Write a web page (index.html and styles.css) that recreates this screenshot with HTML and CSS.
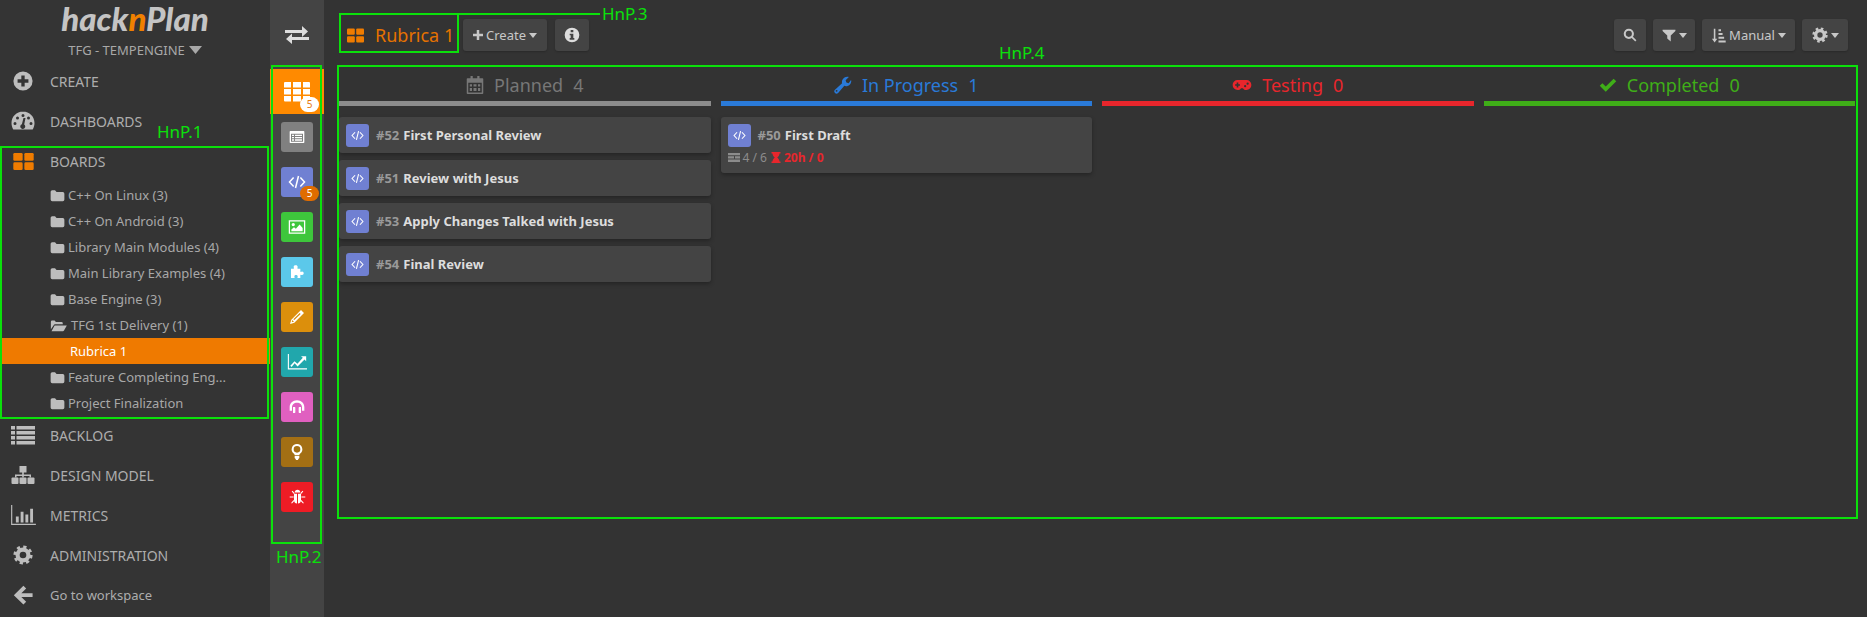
FILE: index.html
```html
<!DOCTYPE html>
<html lang="en">
<head>
  <meta charset="UTF-8" />
  <title>hacknPlan - Rubrica 1</title>
  <link rel="stylesheet" href="styles.css">
</head>
<body>

  <svg class="icon-defs" xmlns="http://www.w3.org/2000/svg">
    <symbol id="i-boards" viewBox="0 0 24 20">
      <rect x="0" y="0" width="11" height="9" rx="1.500"/><rect x="13" y="0" width="11" height="9" rx="1.500"/>
      <rect x="0" y="11" width="11" height="9" rx="1.500"/><rect x="13" y="11" width="11" height="9" rx="1.500"/>
    </symbol>
    <symbol id="i-folder" viewBox="0 0 24 24">
      <path d="M1 6a2.500 2.500 0 0 1 2.500-2.500h4.500l2.500 3h10a2.500 2.500 0 0 1 2.500 2.500v9.500a2.500 2.500 0 0 1-2.500 2.500h-17a2.500 2.500 0 0 1-2.500-2.500z"/>
    </symbol>
    <symbol id="i-folder-open" viewBox="0 0 28 24">
      <path d="M1 18V6a2 2 0 0 1 2-2h4l2 2.500h9a2 2 0 0 1 2 2V10H8a3 3 0 0 0-2.800 1.800z"/>
      <path d="M7 12h19.500l-4.500 8a2 2 0 0 1-1.800 1H2z"/>
    </symbol>
    <symbol id="i-gear" viewBox="0 0 24 24">
      <circle cx="12" cy="12" r="9.500" fill="none" stroke="currentColor" stroke-width="4" stroke-dasharray="3.730 3.730"/>
      <circle cx="12" cy="12" r="6.500" fill="none" stroke="currentColor" stroke-width="5"/>
    </symbol>
    <symbol id="i-code" viewBox="0 0 24 24">
      <path d="M7.500 6 2 12l5.500 6M16.500 6 22 12l-5.500 6M14 4l-4 16" fill="none" stroke="currentColor" stroke-width="2"/>
    </symbol>
    <symbol id="i-caret" viewBox="0 0 10 6">
      <path d="M0 0h10L5 6z"/>
    </symbol>
  </svg>

  <div class="app">

    <aside class="sidebar">
      <div class="logo">hack<span class="logo-n">n</span>Plan</div>
      <div class="project">TFG - TEMPENGINE <svg class="project-caret"><use href="#i-caret"/></svg></div>

      <nav class="nav">
        <a class="nav-item">
          <svg class="nav-icon nav-icon-small" viewBox="0 0 24 24"><path fill-rule="evenodd" d="M12 .500a11.500 11.500 0 1 1 0 23 11.500 11.500 0 0 1 0-23zM10 5.500V10H5.500v4H10v4.500h4V14h4.500v-4H14V5.500z"/></svg>
          CREATE
        </a>
        <a class="nav-item">
          <svg class="nav-icon" viewBox="0 0 24 24"><path fill-rule="evenodd" d="M12 2.500C5.500 2.500.5 7.700.5 14c0 2.300.6 4.500 1.800 6.500h19.400c1.200-2 1.800-4.200 1.800-6.500 0-6.300-5-11.500-11.500-11.500zM12 5a1.500 1.500 0 1 1 0 3 1.500 1.500 0 0 1 0-3zM6.500 7.500a1.500 1.500 0 1 1 0 3 1.500 1.500 0 0 1 0-3zM17.500 7.500a1.500 1.500 0 1 1 0 3 1.500 1.500 0 0 1 0-3zM4 13a1.500 1.500 0 1 1 0 3 1.500 1.500 0 0 1 0-3zM20 13a1.500 1.500 0 1 1 0 3 1.500 1.500 0 0 1 0-3zM14.500 9l-1.300 6.500a2.500 2.500 0 1 1-2.300-.3L12.500 9z"/></svg>
          DASHBOARDS
        </a>
        <a class="nav-item">
          <svg class="nav-icon-boards"><use href="#i-boards"/></svg>
          BOARDS
        </a>

        <ul class="tree">
          <li class="tree-item"><svg class="tree-icon"><use href="#i-folder"/></svg>C++ On Linux (3)</li>
          <li class="tree-item"><svg class="tree-icon"><use href="#i-folder"/></svg>C++ On Android (3)</li>
          <li class="tree-item"><svg class="tree-icon"><use href="#i-folder"/></svg>Library Main Modules (4)</li>
          <li class="tree-item"><svg class="tree-icon"><use href="#i-folder"/></svg>Main Library Examples (4)</li>
          <li class="tree-item"><svg class="tree-icon"><use href="#i-folder"/></svg>Base Engine (3)</li>
          <li class="tree-item tree-open"><svg class="tree-icon-open"><use href="#i-folder-open"/></svg>TFG 1st Delivery (1)</li>
          <li class="tree-item tree-active">Rubrica 1</li>
          <li class="tree-item"><svg class="tree-icon"><use href="#i-folder"/></svg>Feature Completing Eng...</li>
          <li class="tree-item"><svg class="tree-icon"><use href="#i-folder"/></svg>Project Finalization</li>
        </ul>

        <a class="nav-item">
          <svg class="nav-icon" viewBox="0 0 24 24"><path d="M0 3h4v3.500H0zM5.500 3H24v3.500H5.500zM0 8h4v3.500H0zM5.500 8H24v3.500H5.500zM0 13h4v3.500H0zM5.500 13H24v3.500H5.500zM0 18h4v3.500H0zM5.500 18H24v3.500H5.500z"/></svg>
          BACKLOG
        </a>
        <a class="nav-item">
          <svg class="nav-icon" viewBox="0 0 24 24"><path d="M8.500 3h7v6.500h-7zM11.200 9h1.600v3h-1.600z"/><path d="M4 11.500h16v3h-1.500V13h-5.700v1.500h-1.600V13H5.500v1.500H4z"/><rect x=".5" y="14.500" width="7" height="6.500" rx="1"/><rect x="8.500" y="14.500" width="7" height="6.500" rx="1"/><rect x="16.500" y="14.500" width="7" height="6.500" rx="1"/></svg>
          DESIGN MODEL
        </a>
        <a class="nav-item">
          <svg class="nav-icon nav-icon-wide" viewBox="0 0 26 21"><path d="M0 0h1.200v19.800H26V21H0zM5 12h3v6.500H5zM10 7h3v11.500h-3zM15 10h3v8.500h-3zM20 4h3v14.500h-3z"/></svg>
          METRICS
        </a>
        <a class="nav-item">
          <svg class="nav-icon nav-icon-small"><use href="#i-gear"/></svg>
          ADMINISTRATION
        </a>
        <a class="nav-item nav-item-link">
          <svg class="nav-icon nav-icon-small" viewBox="0 0 24 24"><path d="M12.500 1 15.800 4.300 10 10H23.500V14.500H10L15.800 20.200 12.500 23.500 1 12.200z"/></svg>
          Go to workspace
        </a>
      </nav>
    </aside>

    <div class="strip">
      <div class="strip-top">
        <svg class="swap-icon" viewBox="0 0 24 18"><path d="M0 4h17V0l6 5.500-6 5.500V7H0zM24 11H7V7.500L1 13l6 5v-4h17z"/></svg>
      </div>

      <div class="strip-active">
        <svg class="grid-icon" viewBox="0 0 26 20"><path d="M0 1a1 1 0 0 1 1-1h6v5.500H0zM9 0h8v5.500H9zM19 0h6a1 1 0 0 1 1 1v4.500h-7zM0 7h7v5.500H0zM9 7h8v5.500H9zM19 7h7v5.500h-7zM0 14h7v5.500H1a1 1 0 0 1-1-1zM9 14h8v5.500H9zM19 14h7v4.500a1 1 0 0 1-1 1h-6z"/></svg>
        <span class="pill pill-white">5</span>
      </div>

      <div class="strip-item">
        <div class="tile tile-gray">
          <svg class="tile-icon tile-icon-small" viewBox="0 0 24 24"><path fill-rule="evenodd" d="M2 3h20a1 1 0 0 1 1 1v16a1 1 0 0 1-1 1H2a1 1 0 0 1-1-1V4a1 1 0 0 1 1-1zM3 7v12h18V7zM4.500 8.500h3v2h-3zM9 8.500h10.500v2H9zM4.500 12h3v2h-3zM9 12h10.500v2H9zM4.500 15.500h3v2h-3zM9 15.500h10.500v2H9z"/></svg>
        </div>
      </div>
      <div class="strip-item">
        <div class="tile tile-purple"><svg class="tile-icon"><use href="#i-code"/></svg></div>
        <span class="pill pill-orange">5</span>
      </div>
      <div class="strip-item">
        <div class="tile tile-green">
          <svg class="tile-icon" viewBox="0 0 24 24"><path fill-rule="evenodd" d="M1 3h22v18H1zM2.700 4.700v14.600h18.600V4.700zM7 6.500a2.200 2.200 0 1 1 0 4.400 2.200 2.200 0 0 1 0-4.400zM4.500 17.800v-2.500l3.500-3 2.500 2 5-5.500 4 4.500v4.500z"/></svg>
        </div>
      </div>
      <div class="strip-item">
        <div class="tile tile-blue">
          <svg class="tile-icon tile-icon-small" viewBox="0 0 24 24"><path d="M10 2c2 0 3 1 3 2.500 0 .8-.5 1.300-.5 2 0 .4.300.5 1 .5H17v4c0 .7.200 1 .6 1 .7 0 1.200-.6 2-.6 1.500 0 2.400 1.100 2.400 2.600s-.9 2.600-2.400 2.600c-.8 0-1.300-.6-2-.6-.4 0-.6.300-.6 1V21h-3.500c-.7 0-1-.2-1-.6 0-.7.600-1.200.6-2 0-1-1-1.900-2.600-1.900s-2.500.9-2.500 1.900c0 .8.600 1.300.6 2 0 .4-.3.600-1 .6H3V7h3.500c.7 0 1-.1 1-.5 0-.7-.5-1.200-.5-2C7 3 8 2 10 2z"/></svg>
        </div>
      </div>
      <div class="strip-item">
        <div class="tile tile-orange">
          <svg class="tile-icon tile-icon-small" viewBox="0 0 24 24"><path fill-rule="evenodd" d="M18 1.500 22.500 6 8 20.500 1.500 22.500 3.500 16zM5 16.500l-1 3.500 3.500-1zM16 6 6.500 15.500l1.500 1L17.500 7.500z"/></svg>
        </div>
      </div>
      <div class="strip-item">
        <div class="tile tile-teal">
          <svg class="tile-icon tile-icon-large" viewBox="0 0 24 24"><path d="M1 2.500h1.300v17H24V21H1z"/><path d="M4 16.500 9 11l3.500 3L19 7l-2.200-2H23v6l-2-2-8.300 8.500L9.200 13.500 5.500 18z"/></svg>
        </div>
      </div>
      <div class="strip-item">
        <div class="tile tile-pink">
          <svg class="tile-icon tile-icon-small" viewBox="0 0 24 24"><path d="M12 2C5.500 2 1 6.500 1 12.500v5h3.500v-5C4.500 8.500 7.500 5.500 12 5.500s7.500 3 7.500 7v5H23v-5C23 6.500 18.500 2 12 2z"/><path d="M6 12h2.500a1 1 0 0 1 1 1v7a1 1 0 0 1-1 1H6zM18 12h-2.500a1 1 0 0 0-1 1v7a1 1 0 0 0 1 1H18z"/></svg>
        </div>
      </div>
      <div class="strip-item">
        <div class="tile tile-brown">
          <svg class="tile-icon tile-icon-small" viewBox="0 0 24 24"><path fill-rule="evenodd" d="M12 0a8 8 0 0 1 4.500 14.600c-.8.700-1 1.400-1 2.400h-7c0-1-.2-1.700-1-2.400A8 8 0 0 1 12 0zM12 3a5 5 0 1 0 0 10 5 5 0 0 0 0-10z"/><path d="M8.500 18h7v3l-1.500 1.500-.5 1.500h-3l-.5-1.500L8.500 21z"/></svg>
        </div>
      </div>
      <div class="strip-item">
        <div class="tile tile-red">
          <svg class="tile-icon tile-icon-bug" viewBox="0 0 24 24"><path d="M8 6.500C8 4 9.700 2.500 12 2.500S16 4 16 6.500z"/><path d="M7 8h4.300v14C8.500 21.700 7 19.500 7 16.500zM17 8h-4.300v14c2.800-.3 4.300-2.500 4.300-5.500z"/><path d="M5 4l3 3.500-1 1L3.800 5zM19 4l-3 3.500 1 1L20.200 5zM1 12h5.500v1.500H1zM17.500 12H23v1.500h-5.500zM6.500 17l-3.500 4 1.200 1 3.300-3.500zM17.500 17l3.500 4-1.200 1-3.300-3.500z"/></svg>
        </div>
      </div>
    </div>

    <main class="main">
      <header class="toolbar">
        <div class="board-title">
          <svg class="board-title-icon"><use href="#i-boards"/></svg>
          Rubrica 1
        </div>
        <button class="btn btn-create">
          <svg class="btn-plus" viewBox="0 0 12 12"><path d="M4.500 0h3v4.500H12v3H7.500V12h-3V7.500H0v-3h4.500z"/></svg>
          Create
          <svg class="caret"><use href="#i-caret"/></svg>
        </button>
        <button class="btn btn-square">
          <svg class="btn-icon-large" viewBox="0 0 24 24"><path fill-rule="evenodd" d="M12 1a11 11 0 1 1 0 22 11 11 0 0 1 0-22zM10 4.500v3.500h4V4.500zM8.500 10v2.500H10v4H8.500V19h7v-2.500H14V10z"/></svg>
        </button>

        <div class="toolbar-right">
          <button class="btn btn-search">
            <svg class="btn-icon" viewBox="0 0 24 24"><circle cx="10" cy="10" r="7" fill="none" stroke="currentColor" stroke-width="3.500"/><path d="M14.500 16.500l2-2 6.500 6.500-2 2z"/></svg>
          </button>
          <button class="btn btn-filter">
            <svg class="btn-icon" viewBox="0 0 24 24"><path d="M1 3h22v2L15 13v10l-6-5v-5L1 5z"/></svg>
            <svg class="caret"><use href="#i-caret"/></svg>
          </button>
          <button class="btn btn-sort">
            <svg class="btn-icon" viewBox="0 0 24 24"><path d="M4.500 1h2.500v16h3L5.800 23 1.500 17h3zM12 2h4v3h-4zM12 8h6.500v3H12zM12 14h9v3h-9zM12 20h11.500v3H12z"/></svg>
            Manual
            <svg class="caret"><use href="#i-caret"/></svg>
          </button>
          <button class="btn btn-gear">
            <svg class="btn-icon"><use href="#i-gear"/></svg>
            <svg class="caret"><use href="#i-caret"/></svg>
          </button>
        </div>
      </header>

      <section class="board">
        <div class="column">
          <h2 class="column-title title-planned">
            <svg class="column-icon" viewBox="0 0 24 24"><path fill-rule="evenodd" d="M6 0h3v3h6V0h3v3h4a1 1 0 0 1 1 1v19a1 1 0 0 1-1 1H2a1 1 0 0 1-1-1V4a1 1 0 0 1 1-1h4zM3 9v13h18V9zM5 11h3v3H5zM10 11h4v3h-4zM16 11h3v3h-3zM5 16h3v4H5zM10 16h4v4h-4zM16 16h3v4h-3z"/></svg>
            <span>Planned</span><span>4</span>
          </h2>
          <div class="card">
            <div class="card-head">
              <span class="task-icon"><svg><use href="#i-code"/></svg></span>
              <span class="task-id">#52</span><span class="task-name">First Personal Review</span>
            </div>
          </div>
          <div class="card">
            <div class="card-head">
              <span class="task-icon"><svg><use href="#i-code"/></svg></span>
              <span class="task-id">#51</span><span class="task-name">Review with Jesus</span>
            </div>
          </div>
          <div class="card">
            <div class="card-head">
              <span class="task-icon"><svg><use href="#i-code"/></svg></span>
              <span class="task-id">#53</span><span class="task-name">Apply Changes Talked with Jesus</span>
            </div>
          </div>
          <div class="card">
            <div class="card-head">
              <span class="task-icon"><svg><use href="#i-code"/></svg></span>
              <span class="task-id">#54</span><span class="task-name">Final Review</span>
            </div>
          </div>
        </div>

        <div class="column">
          <h2 class="column-title title-progress">
            <svg class="column-icon" viewBox="0 0 24 24"><path fill-rule="evenodd" d="M23 6.500c0 4-3.200 7-7 7-.8 0-1.500-.1-2.200-.4L5.500 22.500a3 3 0 0 1-4.200 0 3 3 0 0 1 0-4.200l9.500-8.500A7 7 0 0 1 18 1c.6 0 1.300.1 1.800.3L15.500 5.500l1 3 3 1 3.200-4.200c.2.400.3.800.3 1.200zM3.500 18.500a1.200 1.200 0 1 0 0 2.400 1.200 1.200 0 0 0 0-2.400z"/></svg>
            <span>In Progress</span><span>1</span>
          </h2>
          <div class="card">
            <div class="card-head">
              <span class="task-icon"><svg><use href="#i-code"/></svg></span>
              <span class="task-id">#50</span><span class="task-name">First Draft</span>
            </div>
            <div class="card-meta">
              <svg class="meta-list" viewBox="0 0 24 18"><path d="M0 0h24v4.500H0zM0 6.500h12v4.500H0zM14 6.500h10v4.500H14zM0 13h24v5H0z"/></svg>
              <span>4 / 6</span>
              <svg class="meta-glass" viewBox="0 0 20 22"><path d="M1 0h18v3h-2c0 4-2.500 6-4.500 8 2 2 4.500 4 4.500 8h2v3H1v-3h2c0-4 2.500-6 4.500-8C5.500 9 3 7 3 3H1z"/></svg>
              <span class="meta-late">20h / 0</span>
            </div>
          </div>
        </div>

        <div class="column">
          <h2 class="column-title title-testing">
            <svg class="column-icon column-icon-wide" viewBox="0 0 32 18"><path fill-rule="evenodd" d="M9 1h14a8 8 0 0 1 0 16c-2.500 0-4.500-1-5.500-3h-3c-1 2-3 3-5.500 3A8 8 0 0 1 9 1zM7.500 5v2.700H5v2.600h2.500V13h2.600v-2.700h2.600V7.700h-2.600V5zM21 9a1.800 1.800 0 1 0 0 3.600A1.800 1.800 0 0 0 21 9zM25 5a1.800 1.800 0 1 0 0 3.600A1.800 1.800 0 0 0 25 5z"/></svg>
            <span>Testing</span><span>0</span>
          </h2>
        </div>

        <div class="column">
          <h2 class="column-title title-completed">
            <svg class="column-icon" viewBox="0 0 24 24"><path d="M9 21 1 13l3.500-3.500L9 14 19.500 3.500 23 7z"/></svg>
            <span>Completed</span><span>0</span>
          </h2>
        </div>
      </section>
    </main>

  </div>

  <!-- review markers drawn over the screenshot -->
  <div class="mark mark-1"></div>
  <div class="mark mark-2"></div>
  <div class="mark mark-3"></div>
  <div class="mark mark-3-line"></div>
  <div class="mark mark-4"></div>
  <span class="mark-label label-1">HnP.1</span>
  <span class="mark-label label-2">HnP.2</span>
  <span class="mark-label label-3">HnP.3</span>
  <span class="mark-label label-4">HnP.4</span>

</body>
</html>
```

FILE: styles.css
```css
* {
  box-sizing: border-box;
}

html, body {
  height: 100%;
}

body {
  margin: 0;
  position: relative;
  overflow: hidden;
  background-color: #333;
  font-family: "Noto Sans", sans-serif;
  color: #b0b0b0;
}

svg {
  fill: currentColor;
}

.icon-defs {
  display: none;
}

.app {
  display: flex;
  height: 100%;
}

/* left menu */
.sidebar {
  width: 270px;
  flex-shrink: 0;
  background-color: #343434;
}

.logo {
  height: 38px;
  text-align: center;
  font-family: "Lato", sans-serif;
  font-size: 33px;
  font-weight: 900;
  font-style: italic;
  line-height: 36px;
  color: #c4c4c4;
}

.logo-n {
  color: #f08000;
}

.project {
  height: 24px;
  display: flex;
  align-items: center;
  justify-content: center;
  gap: 4px;
  font-size: 13px;
  color: #a8a8a8;
}

.project-caret {
  width: 13px;
  height: 8px;
}

.nav-item {
  height: 40px;
  padding-bottom: 2px;
  display: flex;
  align-items: center;
  font-size: 14px;
  color: #adadad;
}

.nav-item-link {
  font-size: 13px;
}

.nav-icon {
  width: 24px;
  height: 24px;
  margin-left: 11px;
  margin-right: 15px;
  color: #bdbdbd;
}

.nav-icon-small {
  width: 20px;
  height: 20px;
  margin-left: 13px;
  margin-right: 17px;
}

.nav-icon-wide {
  width: 25px;
  height: 20px;
  margin-left: 11px;
  margin-right: 14px;
}

.nav-icon-boards {
  width: 21px;
  height: 17px;
  margin-left: 13px;
  margin-right: 16px;
  color: #f07c00;
}

.tree {
  list-style: none;
  margin: 0;
  padding: 0;
}

.tree-item {
  height: 26px;
  display: flex;
  align-items: center;
  padding-left: 50px;
  font-size: 13px;
  color: #a8a8a8;
}

.tree-icon {
  width: 15px;
  height: 15px;
  margin-right: 3px;
  color: #bdbdbd;
}

.tree-icon-open {
  width: 18px;
  height: 15px;
  margin-right: 3px;
  color: #bdbdbd;
}

.tree-active {
  padding-left: 70px;
  background-color: #ef7a00;
  color: #fff;
}

/* icon strip */
.strip {
  width: 54px;
  flex-shrink: 0;
  background-color: #444;
}

.strip-top {
  height: 69px;
  display: flex;
  align-items: center;
  justify-content: center;
}

.swap-icon {
  width: 24px;
  height: 18px;
  color: #ddd;
}

.strip-active {
  position: relative;
  height: 45px;
  display: flex;
  align-items: center;
  justify-content: center;
  background-color: #ff8a00;
}

.grid-icon {
  width: 26px;
  height: 20px;
  color: #fff;
}

.strip-item {
  position: relative;
  height: 45px;
  display: flex;
  align-items: center;
  justify-content: center;
}

.tile {
  width: 32px;
  height: 30px;
  display: flex;
  align-items: center;
  justify-content: center;
  border-radius: 3px;
}

.tile-icon {
  width: 18px;
  height: 18px;
  color: #fff;
}

.tile-icon-small {
  width: 16px;
  height: 16px;
}

.tile-icon-large {
  width: 20px;
  height: 20px;
}

.tile-icon-bug {
  width: 17px;
  height: 17px;
}

.tile-gray { background-color: #808080; }
.tile-purple { background-color: #7080d2; }
.tile-green { background-color: #3ec63c; }
.tile-blue { background-color: #5bc8ea; }
.tile-orange { background-color: #dc8f0c; }
.tile-teal { background-color: #21a7ac; }
.tile-pink { background-color: #e060c0; }
.tile-brown { background-color: #a36f14; }
.tile-red { background-color: #ee1c25; }

.pill {
  position: absolute;
  left: 30px;
  width: 19px;
  height: 15px;
  border-radius: 8px;
  text-align: center;
  font-size: 10px;
  line-height: 15px;
}

.pill-white {
  top: 28px;
  background-color: #fff;
  color: #e87a10;
}

.pill-orange {
  top: 27px;
  background-color: #e06c00;
  color: #fff;
}

/* board area */
.main {
  flex: 1;
  min-width: 0;
  padding: 0 12px 0 15px;
  background-color: #333;
}

.toolbar {
  height: 69px;
  padding-top: 19px;
  display: flex;
  align-items: flex-start;
  gap: 8px;
}

.board-title {
  width: 116px;
  height: 32px;
  display: flex;
  align-items: center;
  padding-left: 8px;
  gap: 11px;
  font-size: 18px;
  color: #e67200;
  white-space: nowrap;
}

.board-title-icon {
  width: 17px;
  height: 15px;
  flex-shrink: 0;
  color: #f07c00;
}

.btn {
  height: 32px;
  display: flex;
  align-items: center;
  justify-content: center;
  gap: 3px;
  padding: 0;
  border: 0;
  border-radius: 3px;
  background-color: #444;
  font-family: inherit;
  font-size: 13px;
  color: #c8c8c8;
  box-shadow: 0 1px 2px rgba(0,0,0,0.2);
}

.btn-create { width: 84px; }
.btn-square { width: 34px; }
.btn-search { width: 32px; }
.btn-filter { width: 42px; }
.btn-sort { width: 93px; }
.btn-gear { width: 46px; }

.btn-plus {
  width: 10px;
  height: 10px;
}

.btn-icon {
  width: 14px;
  height: 14px;
}

.btn-sort .btn-icon {
  width: 15px;
  height: 15px;
}

.btn-gear .btn-icon {
  width: 16px;
  height: 16px;
}

.btn-icon-large {
  width: 16px;
  height: 16px;
  color: #ddd;
}

.caret {
  width: 8px;
  height: 5px;
}

.toolbar-right {
  margin-left: auto;
  margin-right: 7px;
  display: flex;
  gap: 7px;
}

.board {
  display: grid;
  grid-template-columns: repeat(4, 1fr);
  gap: 10px;
}

.column-title {
  margin: 0 0 11px;
  height: 37px;
  padding-bottom: 1px;
  display: flex;
  align-items: center;
  justify-content: center;
  gap: 10px;
  border-bottom: 5px solid;
  font-size: 18px;
  font-weight: normal;
}

.title-planned { color: #777; border-color: #8c8c8c; }
.title-progress { color: #2a7ad8; }
.title-testing { color: #e8262c; }
.title-completed { color: #3fae18; }

.column-icon {
  width: 18px;
  height: 18px;
}

.column-icon-wide {
  width: 20px;
  height: 12px;
}

.card {
  margin-bottom: 7px;
  padding: 7px;
  border-radius: 3px;
  background-color: #444;
  box-shadow: 0 2px 4px rgba(0,0,0,0.3);
}

.card-head {
  height: 22px;
  display: flex;
  align-items: center;
  font-size: 13px;
}

.task-icon {
  width: 23px;
  height: 23px;
  margin-right: 7px;
  display: flex;
  align-items: center;
  justify-content: center;
  border-radius: 3px;
  background-color: #7080d2;
  color: #fff;
}

.task-icon svg {
  width: 13px;
  height: 13px;
}

.task-id {
  margin-right: 4px;
  font-weight: bold;
  color: #999;
}

.task-name {
  font-weight: bold;
  color: #ddd;
}

.card-meta {
  height: 17px;
  margin-top: 3px;
  display: flex;
  align-items: center;
  gap: 3px;
  font-size: 12px;
  color: #8c8c8c;
}

.meta-list {
  width: 12px;
  height: 9px;
}

.meta-glass {
  width: 10px;
  height: 11px;
  margin-left: 1px;
  color: #e8262c;
}

.meta-late {
  font-weight: bold;
  color: #e8262c;
}

/* green markers over the screenshot */
.mark {
  position: absolute;
  border: 2px solid #0be00b;
}

.mark-1 { left: 0; top: 146px; width: 269px; height: 273px; }
.mark-2 { left: 271px; top: 65px; width: 51px; height: 479px; }
.mark-3 { left: 339px; top: 13px; width: 120px; height: 40px; }
.mark-3-line { left: 402px; top: 13px; width: 198px; height: 2px; border-width: 1px; }
.mark-4 { left: 337px; top: 65px; width: 1521px; height: 454px; }

.mark-label {
  position: absolute;
  font-size: 17px;
  line-height: 20px;
  color: #0be00b;
}

.label-1 { left: 157px; top: 122px; }
.label-2 { left: 276px; top: 547px; }
.label-3 { left: 602px; top: 4px; }
.label-4 { left: 999px; top: 43px; }
```
